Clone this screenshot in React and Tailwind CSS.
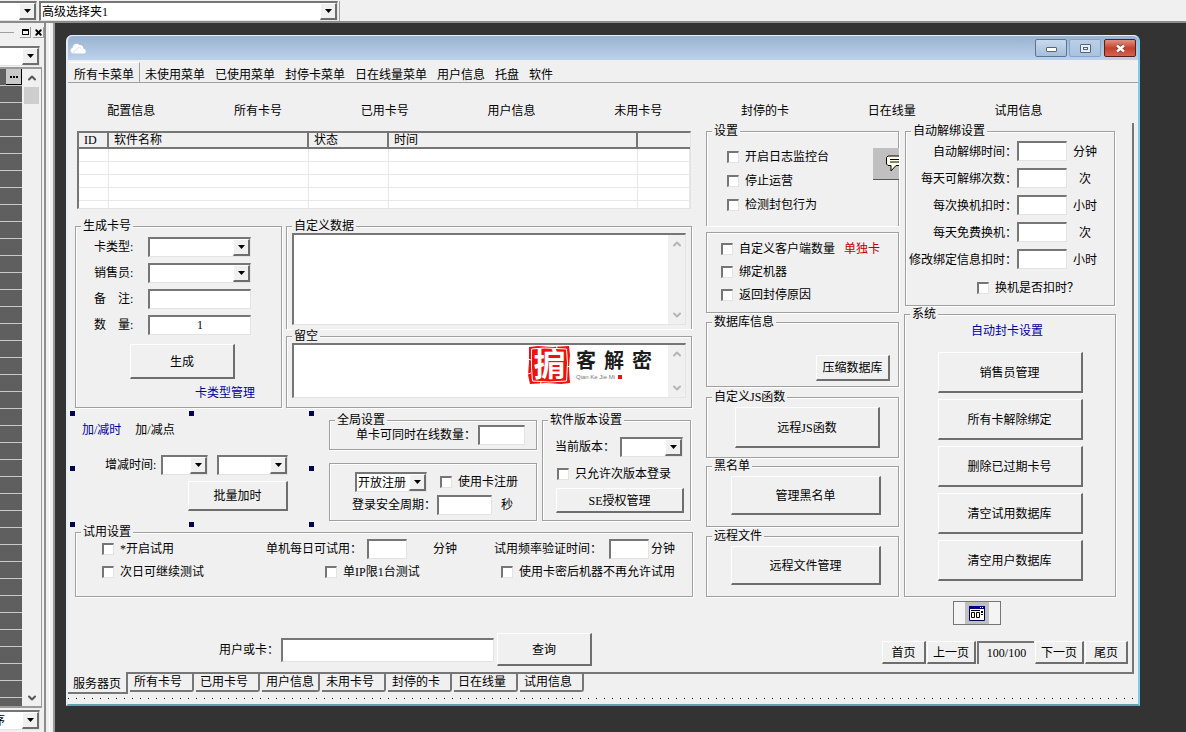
import React from 'react';
import clsx from 'clsx';
import { ChevronDown, ChevronUp, X } from 'lucide-react';

const SUNKEN = 'border-t-2 border-l-2 border-r border-b border-t-[#767676] border-l-[#767676] border-r-[#e3e3e3] border-b-[#e3e3e3] bg-white';
const RAISED = 'border-t border-l border-r-2 border-b-2 border-t-white border-l-white border-r-[#6e6e6e] border-b-[#6e6e6e] bg-[#f0f0f0]';
const BOX = 'min-w-0 border border-[#a0a0a0] shadow-[1px_1px_0_#fff,inset_1px_1px_0_#fff]';

const MENU = ['所有卡菜单', '未使用菜单', '已使用菜单', '封停卡菜单', '日在线量菜单', '用户信息', '托盘', '软件'];
const LINKS = ['配置信息', '所有卡号', '已用卡号', '用户信息', '未用卡号', '封停的卡', '日在线量', '试用信息'];
const TABS = ['所有卡号', '已用卡号', '用户信息', '未用卡号', '封停的卡', '日在线量', '试用信息'];
const SYSTEM_ACTIONS = ['销售员管理', '所有卡解除绑定', '删除已过期卡号', '清空试用数据库', '清空用户数据库'];
const UNBIND_FIELDS = [
  { id: 'unbind-time', label: '自动解绑时间：', unit: '分钟' },
  { id: 'unbind-count', label: '每天可解绑次数：', unit: '次' },
  { id: 'swap-cost', label: '每次换机扣时：', unit: '小时' },
  { id: 'swap-free', label: '每天免费换机：', unit: '次' },
  { id: 'edit-cost', label: '修改绑定信息扣时：', unit: '小时' },
];

function Button({ className, children }) {
  return (
    <button type="button" className={clsx(RAISED, 'flex shrink-0 items-center justify-center pt-px whitespace-nowrap', className)}>
      {children}
    </button>
  );
}

function TextBox({ className, ...rest }) {
  return <input type="text" className={clsx(SUNKEN, 'h-5 min-w-0 shrink-0 outline-none', className)} {...rest} />;
}

function Check({ className, children }) {
  return (
    <label className={clsx('flex h-[14px] items-center gap-[6px] whitespace-nowrap', className)}>
      <input type="checkbox" className={clsx(SUNKEN, 'size-3 shrink-0 appearance-none checked:bg-[#333]')} />
      {children}
    </label>
  );
}

function Combo({ className, value = '', ...rest }) {
  return (
    <div className={clsx('flex h-5 shrink-0 border-t-2 border-r border-b border-l-2 border-t-[#767676] border-r-[#e3e3e3] border-b-[#e3e3e3] border-l-[#767676] bg-white', className)}>
      <select className="min-w-0 flex-1 appearance-none pl-px outline-none" {...rest}>
        <option>{value}</option>
      </select>
      <span className={clsx(RAISED, 'pointer-events-none flex w-[17px] shrink-0 items-center justify-center')}>
        <svg width="7" height="4" viewBox="0 0 7 4"><path d="M0 0h7L3.5 4z" /></svg>
      </span>
    </div>
  );
}

function Group({ title, className, children }) {
  return (
    <fieldset className={clsx(BOX, className)}>
      {title && <legend className="ml-[5px] bg-[#f0f0f0] px-[2px]">{title}</legend>}
      {children}
    </fieldset>
  );
}

function ScrollText({ className, label, children }) {
  return (
    <div className={clsx(SUNKEN, 'relative mx-[5px] flex', className)}>
      <textarea aria-label={label} className="min-w-0 flex-1 resize-none outline-none" />
      <div className="flex w-[17px] flex-col items-center justify-between bg-[#f0f0f0] py-[3px] text-[#b4b4b4]">
        <ChevronUp size={12} strokeWidth={4} />
        <ChevronDown size={12} strokeWidth={4} />
      </div>
      {children}
    </div>
  );
}

function Logo() {
  return (
    <div className="pointer-events-none absolute top-0 right-[33px] flex gap-[3px]">
      <div className="relative flex h-10 w-[43px] items-center justify-center">
        <svg className="absolute inset-0" width="43" height="40" viewBox="0 0 43 40">
          <path d="M1 2l9-1 14 1 17-1 1 9-1 13 1 15-9 1-15-1-16 1-2-9 1-13z" fill="#ee120c" />
          <path d="M3.500 4l13-1 22 1 1 14-1 18-17 1-17-1-1-13z" fill="none" stroke="#fff" />
          <path d="M0 14l3 1M42 21l-3 1M12 40l1-3M28 0l1 3M0 29l3-1" stroke="#fff" />
        </svg>
        <span className="relative text-[32px] leading-8 font-bold text-white">掮</span>
      </div>
      <div className="flex flex-col pt-[4px] pl-[2px]">
        <span className="flex gap-[8px] text-[20px] leading-6 font-bold text-[#1c1c1c]">
          <span>客</span><span>解</span><span>密</span>
        </span>
        <span className="flex items-center gap-[3px] font-['Liberation_Sans',sans-serif] text-[6px] leading-[8px] text-[#777]">
          Qian Ke Jie Mi <span className="size-1 bg-[#ee120c]" />
        </span>
      </div>
    </div>
  );
}

function Sidebar() {
  return (
    <aside className="flex w-[55px] shrink-0 border-r-2 border-r-[#9a9a9a] bg-[#f0f0f0]">
      <div className="flex w-[46px] flex-col border-r-2 border-r-[#8c8c8c]">
        <div className="flex h-[19px] items-center justify-end gap-[2px]">
          <span className="mr-1 h-px flex-1 bg-[#a0a0a0]" />
          <button type="button" aria-label="还原" className="flex size-[11px] items-center justify-center border-r border-b border-[#a0a0a0]">
            <span className="h-[6px] w-[7px] border border-t-2 border-black" />
          </button>
          <button type="button" aria-label="关闭面板" className="flex size-[11px] items-center justify-center border-r border-b border-[#a0a0a0]">
            <X size={9} strokeWidth={5} />
          </button>
        </div>
        <div className="mt-[4px] mr-[4px] flex flex-col"><Combo className="-ml-0.5" aria-label="对象" /></div>
        <div className="mt-px mr-[2px] flex flex-1 border-t-2 border-r border-b-2 border-[#9a9a9a]">
          <div className="flex w-[22px] flex-col items-end bg-[#5f5f5f] bg-[repeating-linear-gradient(180deg,transparent_0_16px,#c9c9c9_16px_17px)]">
            <button type="button" aria-label="更多" className="flex h-4 w-4 items-center justify-center gap-px border-r border-b border-black bg-[#c8c8c8]">
              <i className="size-[2px] bg-black" /><i className="size-[2px] bg-black" /><i className="size-[2px] bg-black" />
            </button>
          </div>
          <div className="flex flex-1 flex-col items-center pt-[3px] pb-[2px] text-[#555]">
            <ChevronUp size={12} strokeWidth={4} />
            <div className="mt-[3px] h-[17px] w-[15px] bg-[#cdcdcd]" />
            <ChevronDown size={12} strokeWidth={4} className="mt-auto" />
          </div>
        </div>
        <div className="mt-[2px] mr-[4px] mb-[2px] flex flex-col"><Combo className="-ml-[10px]" value="序" aria-label="程序" /></div>
      </div>
      <div className="ml-[3px] w-px bg-white" />
    </aside>
  );
}

function TitleBar() {
  return (
    <header className="flex h-[25px] justify-between rounded-t-[5px] border-t border-[#e6f0fa] bg-linear-to-b from-[#98b2cf] to-[#bcd2ec] pr-[2px] pl-[2px]">
      <svg className="mt-[7px]" width="16" height="11" viewBox="0 0 16 11">
        <path d="M4 10.500C-.5 10.500-.5 5.500 2.600 5 2.300 1.500 7-1 9.300 2.200 12 1.600 13.500 3.600 13.200 5.600 16.600 6.200 16.600 10.500 13.600 10.500z" fill="#fff" />
        <path d="M4.500 10.500C3 8.500 5 6.500 6.500 7 7 4.500 9.500 4 11 5.500" fill="none" stroke="#bcd2ec" strokeWidth=".6" />
      </svg>
      <div className="flex gap-[2px] pt-[3px]">
        <button type="button" aria-label="最小化" className="flex h-[18px] w-8 items-center justify-center rounded-[2px] border border-[#5d7594] bg-linear-to-b from-[#c8d9ec] to-[#a5bedb]">
          <span className="mt-[2px] h-[5px] w-[11px] rounded-[1px] border border-[#56647a] bg-white" />
        </button>
        <button type="button" aria-label="最大化" className="flex h-[18px] w-8 items-center justify-center rounded-[2px] border border-[#8aa3c2] bg-linear-to-b from-[#bbcfe6] to-[#a9c2de]">
          <span className="flex h-[9px] w-[11px] items-center justify-center rounded-[1px] border border-[#56647a] bg-[#e8eef6]">
            <span className="h-[3px] w-[5px] border border-[#56647a]" />
          </span>
        </button>
        <button type="button" aria-label="关闭" className="ml-px flex h-[18px] w-8 items-center justify-center rounded-[2px] border border-[#5b1c1c] bg-linear-to-b from-[#dd9183] via-[#c4402c] to-[#d0644c]">
          <svg width="11" height="9" viewBox="0 0 11 9">
            <path d="M2 1.500l7 6M9 1.500l-7 6" stroke="#6b4040" strokeWidth="3.800" />
            <path d="M2 1.500l7 6M9 1.500l-7 6" stroke="#fff" strokeWidth="2.400" />
          </svg>
        </button>
      </div>
    </header>
  );
}

function SoftwareTable() {
  const cell = 'border-r border-b border-[#e8e8e8]';
  const head = 'border-r-2 border-b-2 border-[#767676] pl-[5px] text-left font-normal';
  return (
    <div className={clsx(SUNKEN, 'mr-[2px] ml-[5px] h-[78px] overflow-hidden')}>
      <table className="w-full table-fixed border-separate border-spacing-0">
        <thead>
          <tr className="h-4 bg-[#f0f0f0]">
            <th className={clsx(head, 'w-[30px]')}>ID</th>
            <th className={clsx(head, 'w-[200px]')}>软件名称</th>
            <th className={clsx(head, 'w-[80px]')}>状态</th>
            <th className={clsx(head, 'w-[249px]')}>时间</th>
            <th className="border-b-2 border-[#767676]" />
          </tr>
        </thead>
        <tbody>
          {[0, 1, 2, 3, 4].map((row) => (
            <tr key={row} className="h-[13px]">
              <td className={cell} /><td className={cell} /><td className={cell} /><td className={cell} /><td className={cell} />
            </tr>
          ))}
        </tbody>
      </table>
    </div>
  );
}

function CardForm() {
  return (
    <Group title="生成卡号" className="h-[189px] w-[207px] shrink-0">
      <div className="flex flex-col pt-[4px] pl-[18px]">
        <div className="grid grid-cols-[54px_103px] items-center gap-y-[6px]">
          <label htmlFor="card-type">卡类型:</label>
          <Combo id="card-type" />
          <label htmlFor="seller">销售员:</label>
          <Combo id="seller" />
          <label htmlFor="remark">备　注:</label>
          <TextBox id="remark" />
          <label htmlFor="amount">数　量:</label>
          <TextBox id="amount" defaultValue="1" className="text-center" />
        </div>
        <Button className="mt-[9px] ml-9 h-[35px] w-[105px]">生成</Button>
        <a href="#types" className="mt-[7px] mr-[26px] self-end text-[#00009c]">卡类型管理</a>
      </div>
    </Group>
  );
}

function TimePanel() {
  const handle = 'absolute size-[5px] bg-[#000050]';
  return (
    <div className="relative h-[112px] w-[240px] shrink-0">
      <div className="flex gap-[14px] pt-[10px] pl-[10px]">
        <a href="#time" className="text-[#00009c]">加/减时</a>
        <a href="#points">加/减点</a>
      </div>
      <div className="mt-[18px] flex items-center pl-[33px]">
        <label htmlFor="delta" className="w-14">增减时间:</label>
        <Combo id="delta" className="w-[47px]" />
        <Combo aria-label="单位" className="ml-[9px] w-[71px]" />
      </div>
      <Button className="mt-[6px] ml-[116px] h-[30px] w-[100px]">批量加时</Button>
      <span className={clsx(handle, '-top-[2px] -left-[2px]')} />
      <span className={clsx(handle, '-top-[2px] left-[117px]')} />
      <span className={clsx(handle, '-top-[2px] -right-[2px]')} />
      <span className={clsx(handle, 'top-[53px] -left-[2px]')} />
      <span className={clsx(handle, 'top-[53px] -right-[2px]')} />
      <span className={clsx(handle, '-bottom-[2px] -left-[2px]')} />
      <span className={clsx(handle, '-bottom-[2px] left-[117px]')} />
      <span className={clsx(handle, '-right-[2px] -bottom-[2px]')} />
    </div>
  );
}

function GlobalSettings() {
  return (
    <div className="ml-[17px] w-[208px] shrink-0">
      <Group title="全局设置" className="h-[37px]">
        <div className="-mt-[2px] flex items-center pl-[26px]">
          <label htmlFor="online" className="w-[122px]">单卡可同时在线数量：</label>
          <TextBox id="online" className="w-[47px]" />
        </div>
      </Group>
      <Group className="mt-[13px] h-[58px]">
        <div className="flex items-center pt-[8px] pl-[25px]">
          <Combo aria-label="注册" value="开放注册" className="w-[72px]" />
          <Check className="ml-[13px]">使用卡注册</Check>
        </div>
        <div className="flex items-center pt-[3px] pl-[22px]">
          <label htmlFor="period" className="w-[85px]">登录安全周期：</label>
          <TextBox id="period" className="w-[55px]" />
          <span className="ml-[9px]">秒</span>
        </div>
      </Group>
    </div>
  );
}

function VersionSettings() {
  return (
    <div className="mr-[2px] ml-[5px] min-w-0 flex-1">
      <Group title="软件版本设置" className="h-[108px]">
        <div className="flex items-center pt-[10px] pl-3">
          <label htmlFor="version" className="w-[65px]">当前版本：</label>
          <Combo id="version" className="w-[63px]" />
        </div>
        <Check className="mt-[10px] ml-[14px]">只允许次版本登录</Check>
        <Button className="mt-[7px] ml-[13px] h-[25px] w-[128px]">SE授权管理</Button>
      </Group>
    </div>
  );
}

function TrialSettings() {
  return (
    <Group title="试用设置" className="ml-[3px] h-[72px]">
      <div className="grid grid-cols-[164px_228px_1fr] items-center gap-y-[6px] pl-[26px] whitespace-nowrap">
        <Check>*开启试用</Check>
        <div className="flex items-center">
          <label htmlFor="daily" className="w-[101px]">单机每日可试用：</label>
          <TextBox id="daily" className="w-10" />
          <span className="ml-[26px]">分钟</span>
        </div>
        <div className="flex items-center">
          <label htmlFor="freq" className="w-[115px]">试用频率验证时间：</label>
          <TextBox id="freq" className="w-10" />
          <span className="ml-[2px]">分钟</span>
        </div>
        <Check>次日可继续测试</Check>
        <Check className="ml-[59px]">单IP限1台测试</Check>
        <Check className="ml-[7px]">使用卡密后机器不再允许试用</Check>
      </div>
    </Group>
  );
}

function MiddleColumn() {
  return (
    <div className="w-[193px] shrink-0 pt-px">
      <Group title="设置" className="relative h-[102px] border-b-0">
        <div className="flex flex-col gap-[10px] pt-3 pl-[20px]">
          <Check>开启日志监控台</Check>
          <Check>停止运营</Check>
          <Check>检测封包行为</Check>
        </div>
        <button type="button" aria-label="消息" className="absolute top-[10px] -right-px flex h-8 w-[26px] items-center justify-end border-b border-[#555] bg-[#c0c0c0]">
          <svg width="13" height="18" viewBox="0 0 13 18">
            <path d="M13 1H2L.500 2.500V9L2 10.500h3V16l5-5.500h3z" fill="#ffffe8" />
            <path d="M13 1H2L.500 2.500V9L2 10.500h3V16l5-5.500h3M4 4.500h9M4 7h9" fill="none" stroke="#000" />
          </svg>
        </button>
      </Group>
      <Group className="mt-[6px] h-[81px]">
        <div className="flex flex-col gap-[9px] pt-[9px] pl-[14px]">
          <div className="flex gap-[9px]">
            <Check>自定义客户端数量</Check>
            <span className="text-[#c00000]">单独卡</span>
          </div>
          <Check>绑定机器</Check>
          <Check>返回封停原因</Check>
        </div>
      </Group>
      <Group title="数据库信息" className="mt-[2px] h-[72px]">
        <Button className="mt-[26px] mr-[8px] ml-auto h-[26px] w-[74px]">压缩数据库</Button>
      </Group>
      <Group title="自定义JS函数" className="mt-[3px] h-[68px]">
        <Button className="mt-[3px] mr-[18px] ml-auto h-[41px] w-[145px]">远程JS函数</Button>
      </Group>
      <Group title="黑名单" className="mt-px h-[68px]">
        <Button className="mt-[3px] mr-[17px] ml-auto h-[39px] w-[150px]">管理黑名单</Button>
      </Group>
      <Group title="远程文件" className="mt-[2px] h-[68px]">
        <Button className="mt-[3px] mr-[17px] ml-auto h-[39px] w-[150px]">远程文件管理</Button>
      </Group>
    </div>
  );
}

function RightColumn() {
  return (
    <div className="ml-[5px] w-[212px] shrink-0 pt-px">
      <Group title="自动解绑设置" className="mr-px ml-px h-[182px]">
        <div className="flex flex-col gap-[7px] pt-[3px] pl-[3px]">
          {UNBIND_FIELDS.map((f) => (
            <div key={f.id} className="flex items-center">
              <label htmlFor={f.id} className="w-[108px] pt-[2px] text-right whitespace-nowrap">{f.label}</label>
              <TextBox id={f.id} className="w-[50px]" />
              <span className="ml-[6px] w-6 pt-[2px] text-center">{f.unit}</span>
            </div>
          ))}
        </div>
        <Check className="mt-3 ml-[71px]">换机是否扣时？</Check>
      </Group>
      <Group title="系统" className="mt-px h-[290px]">
        <div className="flex flex-col items-center gap-[6px] pt-[3px]">
          <a href="#auto" className="mb-[8px] mr-[6px] text-[#00009c]">自动封卡设置</a>
          {SYSTEM_ACTIONS.map((name) => (
            <Button key={name} className="h-[41px] w-[145px]">{name}</Button>
          ))}
        </div>
      </Group>
      <div className="mt-[4px] ml-[49px] flex h-6 w-12 justify-center border border-[#767676] bg-[#f4f4f4]">
        <span className="flex w-6 items-center justify-center bg-[#c0c0c0]">
          <svg width="16" height="15" viewBox="0 0 16 15">
            <path d="M.500.500h15v14H.500z" fill="#fff" stroke="#00004c" />
            <path d="M0 0h16v3H0z" fill="#00007c" />
            <path d="M11 1.500h1M13 1.500h1" stroke="#fff" />
            <path d="M2 4.500h9" stroke="#000" />
            <path d="M2.500 6.500h3v5h-3zM7.500 6.500h3v5h-3z" fill="#ffffc8" stroke="#000" />
            <path d="M12 5h2v2h-2zM12 8h2v1h-2z" />
          </svg>
        </span>
      </div>
    </div>
  );
}

function Footer() {
  return (
    <div className="mt-[8px] flex items-center pr-[4px] pb-[6px] pl-[151px]">
      <label htmlFor="query" className="w-[62px]">用户或卡：</label>
      <TextBox id="query" className="h-6 w-[213px]" />
      <Button className="ml-[3px] h-[33px] w-[95px]">查询</Button>
      <nav className="mt-[6px] ml-auto flex gap-px">
        <Button className="h-[23px] w-[44px]">首页</Button>
        <Button className="h-[23px] w-[49px]">上一页</Button>
        <input type="text" aria-label="页码" defaultValue="100/100" className="h-[23px] w-[57px] border-t-2 border-l-2 border-[#767676] bg-[#f0f0f0] text-center outline-none" />
        <Button className="h-[23px] w-[49px]">下一页</Button>
        <Button className="h-[23px] w-[43px]">尾页</Button>
      </nav>
    </div>
  );
}

export default function App() {
  return (
    <div className="flex min-h-screen flex-col bg-[#333] font-['Liberation_Serif','Noto_Sans_CJK_SC',sans-serif] text-[12px] leading-[14px] text-black">
      <div className="flex h-[23px] shrink-0 items-start border-b-2 border-b-[#8c8c8c] bg-[#f0f0f0] pt-px">
        <Combo aria-label="选择" className="-ml-0.5 w-[39px]" />
        <Combo aria-label="选择夹" value="高级选择夹1" className="ml-[2px] w-[299px]" />
        <span className="ml-px h-5 w-px bg-[#a0a0a0]" />
      </div>
      <div className="flex flex-1">
        <Sidebar />
        <main className="mt-3 mr-[46px] mb-[26px] ml-[11px] flex min-w-0 flex-1 flex-col rounded-t-[6px] border-r-2 border-b-2 border-l-2 border-r-[#7ccbee] border-b-[#5fa3b0] border-l-[#e4eef6] bg-[#f0f0f0]">
          <TitleBar />
          <nav className="flex h-[23px] items-end border-b border-[#a0a0a0]">
            {MENU.map((name, i) => (
              <button
                key={name}
                type="button"
                className={clsx('h-[20px] px-[5px] pt-[5px]', i === 0 && 'ml-px border-t border-r border-t-white border-r-[#a0a0a0]')}
              >
                {name}
              </button>
            ))}
          </nav>
          <nav className="mr-[56px] grid grid-cols-8 pt-[21px] pb-[5px] text-center">
            {LINKS.map((name) => <a key={name} href={`#${name}`}>{name}</a>)}
          </nav>
          <div className="mr-[4px] border-r-2 border-b-2 border-[#767676]">
            <div className="flex pr-4 pl-[4px]">
              <div className="mr-[13px] min-w-0 flex-1 pt-[8px]">
                <SoftwareTable />
                <div className="mt-[10px] flex gap-[4px] pl-[3px]">
                  <CardForm />
                  <div className="mr-px min-w-0 flex-1">
                    <Group title="自定义数据" className="h-[110px] border-b-0">
                      <ScrollText label="自定义数据" className="h-[92px]" />
                    </Group>
                    <Group title="留空" className="h-[79px]">
                      <ScrollText label="留空" className="h-[55px]"><Logo /></ScrollText>
                    </Group>
                  </div>
                </div>
                <div className="mt-[5px] flex">
                  <TimePanel />
                  <GlobalSettings />
                  <VersionSettings />
                </div>
                <TrialSettings />
              </div>
              <MiddleColumn />
              <RightColumn />
            </div>
            <Footer />
          </div>
          <div className="flex items-start gap-[2px]">
            <button type="button" className="relative -mt-[2px] h-[22px] w-[60px] border-r-2 border-b-2 border-[#767676] bg-[#f0f0f0] pt-[4px]">服务器页</button>
            {TABS.map((name) => (
              <button
                key={name}
                type="button"
                className={clsx('h-[18px] rounded-br-[3px] border-r-2 border-b-2 border-[#767676] pr-3 pl-[4px] text-left', name === '用户信息' ? 'w-[58px]' : 'w-[64px]')}
              >
                <span className="whitespace-nowrap">{name}</span>
              </button>
            ))}
          </div>
          <div className="mt-[4px] mb-[5px] h-px bg-[repeating-linear-gradient(90deg,#000_0_1px,transparent_1px_8px)]" />
        </main>
      </div>
    </div>
  );
}
